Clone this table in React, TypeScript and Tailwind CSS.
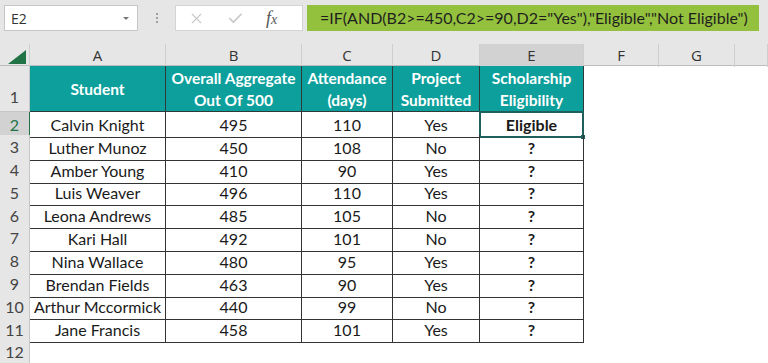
import { X, Check } from "lucide-react";

const rows = [
  ["Calvin Knight", "495", "110", "Yes", "Eligible"],
  ["Luther Munoz", "450", "108", "No", "?"],
  ["Amber Young", "410", "90", "Yes", "?"],
  ["Luis Weaver", "496", "110", "Yes", "?"],
  ["Leona Andrews", "485", "105", "No", "?"],
  ["Kari Hall", "492", "101", "No", "?"],
  ["Nina Wallace", "480", "95", "Yes", "?"],
  ["Brendan Fields", "463", "90", "Yes", "?"],
  ["Arthur Mccormick", "440", "99", "No", "?"],
  ["Jane Francis", "458", "101", "Yes", "?"],
];

const cols = ["A", "B", "C", "D", "E", "F", "G", ""];
const heads = [
  ["Student"],
  ["Overall Aggregate", "Out Of 500"],
  ["Attendance", "(days)"],
  ["Project", "Submitted"],
  ["Scholarship", "Eligibility"],
];

const grid = "grid grid-cols-[30px_136px_136px_91px_87px_104px_75px_76px_1fr]";

export default function App() {
  return (
    <div className="w-[768px] h-[363px] overflow-hidden bg-white font-['Lato','Open_Sans',sans-serif] text-[#1a1a1a]">
      {/* formula bar */}
      <div className="h-[44px] bg-[#e6e6e6] flex items-start pt-[5px] pl-[4px]">
        <div className="w-[134px] h-[26px] bg-white border border-[#c6c6c6] flex items-center justify-between pl-[6px] pr-[8px]">
          <span className="text-[14px] text-[#333] font-['Open_Sans',sans-serif]">E2</span>
          <span className="w-0 h-0 border-l-[3px] border-r-[3px] border-t-[3px] border-l-transparent border-r-transparent border-t-[#777]" />
        </div>
        <div className="w-[37px] h-[26px] flex flex-col items-center justify-center gap-[2px]">
          <span className="w-[2px] h-[2px] bg-[#a0a0a0]" />
          <span className="w-[2px] h-[2px] bg-[#a0a0a0]" />
          <span className="w-[2px] h-[2px] bg-[#a0a0a0]" />
        </div>
        <div className="w-[128px] h-[26px] bg-white border border-[#d4d4d4] flex items-center pl-[12px] gap-[22px] text-[#c8c8c8]">
          <X size={17} strokeWidth={1.6} />
          <Check size={17} strokeWidth={2.4} />
          <span className="text-[18px] text-[#555] italic font-['Liberation_Serif',serif] leading-none">
            f<span className="text-[14px]">x</span>
          </span>
        </div>
        <div className="w-[452px] h-[26px] ml-[4px] bg-[#93c13d] flex items-center pl-[13px] text-[16px] text-[#1f1f1f] whitespace-nowrap">
          =IF(AND(B2&gt;=450,C2&gt;=90,D2="Yes"),"Eligible","Not Eligible")
        </div>
      </div>

      {/* column headers */}
      <div className={`${grid} h-[22px] bg-[#e6e6e6] border-b border-[#bdbdbd] text-[15px] text-[#333] font-['Open_Sans',sans-serif]`}>
        <div className="relative border-r border-[#cfcfcf]">
          <span className="absolute right-[3px] bottom-[3px] w-0 h-0 [border-bottom:14px_solid_#217346] [border-left:18px_solid_transparent]" />
        </div>
        {cols.map((c, i) => (
          <div
            key={i}
            className={`flex items-center justify-center border-r border-[#cfcfcf] ${c === "E" ? "bg-[#d2d2d2]" : ""}`}
          >
            {c}
          </div>
        ))}
      </div>

      {/* row 1 */}
      <div className={`${grid} h-[46px]`}>
        <div className="bg-[#e6e6e6] border-r border-b border-[#c6c6c6] flex items-end justify-center pb-[2px] text-[16px] text-[#444]">1</div>
        {heads.map((h, i) => (
          <div
            key={i}
            className="bg-[#0c9f9b] border-r border-b border-[#2e3a3a] flex flex-col items-center justify-center text-white font-bold text-[15.5px] leading-[22px]"
          >
            {h.map((l) => (
              <span key={l} className="whitespace-nowrap">{l}</span>
            ))}
          </div>
        ))}
        <div />
        <div />
        <div />
      </div>

      {/* data rows */}
      {rows.map((r, ri) => (
        <div key={ri} className={`${grid} h-[22.8px]`}>
          <div
            className={`border-r border-b border-[#c6c6c6] flex items-center justify-center text-[16px] ${
              ri === 0 ? "bg-[#d2d2d2] text-[#217346] border-r-[#217346]" : "bg-[#e6e6e6] text-[#444]"
            }`}
          >
            {ri + 2}
          </div>
          {r.map((v, ci) => (
            <div
              key={ci}
              className={`relative flex items-center justify-center pt-[1px] text-[16px] whitespace-nowrap border-r border-b border-[#333] ${
                ci === 4 ? "font-bold" : ""
              }`}
            >
              {v}
              {ri === 0 && ci === 4 && (
                <>
                  <span className="absolute -left-[1px] -top-[1px] -right-[1px] -bottom-[1px] border-2 border-[#1f5f5c]" />
                  <span className="absolute -right-[2px] -bottom-[2px] w-[4px] h-[4px] bg-[#1f5f5c]" />
                </>
              )}
            </div>
          ))}
          <div />
          <div />
          <div />
        </div>
      ))}

      {/* row 12 */}
      <div className={`${grid} h-[23px]`}>
        <div className="bg-[#e6e6e6] border-r border-[#c6c6c6] flex items-center justify-center text-[16px] text-[#444]">12</div>
      </div>
    </div>
  );
}
